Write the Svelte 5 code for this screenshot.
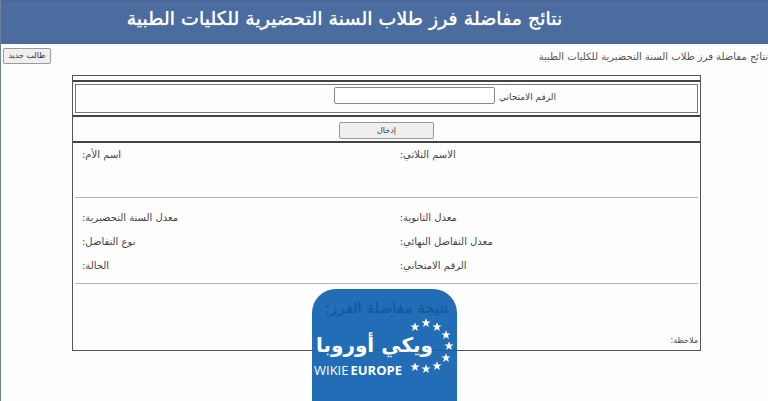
<script>
    let examNumber = $state("");

    const title = "نتائج مفاضلة فرز طلاب السنة التحضيرية للكليات الطبية";

    const names = ["الاسم الثلاثي:", "اسم الأم:"];

    const marks = [
        "معدل الثانوية:",
        "معدل السنة التحضيرية:",
        "معدل التفاضل النهائي:",
        "نوع التفاضل:",
        "الرقم الامتحاني:",
        "الحالة:",
    ];

    const stars = [
        [415, 327],
        [426, 323],
        [437, 327],
        [446, 335],
        [449, 346],
        [446, 358],
        [437, 366],
        [426, 369],
        [415, 367],
    ];

    function reset() {
        examNumber = "";
    }
</script>

<div class="page" dir="rtl">
    <header>
        <h1>{title}</h1>
    </header>

    <div class="toolbar">
        <span class="subtitle">{title}</span>
        <button type="button" class="new-student" onclick={reset}>طالب جديد</button>
    </div>

    <main>
        <form class="panel" onsubmit={(e) => e.preventDefault()}>
            <div class="strip"></div>
            <div class="search">
                <div class="search-box">
                    <label for="exam">الرقم الامتحاني</label>
                    <input id="exam" type="text" bind:value={examNumber} />
                </div>
            </div>
            <div class="submit">
                <button type="submit">إدخال</button>
            </div>
            <div class="result">
                <div class="fields names">
                    {#each names as name}
                        <span>{name}</span>
                    {/each}
                </div>
                <hr />
                <div class="fields marks">
                    {#each marks as mark}
                        <span>{mark}</span>
                    {/each}
                </div>
                <hr />
                <h2>نتيجة مفاضلة الفرز:</h2>
                <p>ملاحظة:</p>
            </div>
        </form>
    </main>

    <div class="badge">
        <svg viewBox="312 289 145 112" aria-hidden="true">
            {#each stars as [x, y]}
                <path
                    transform={`translate(${x} ${y})`}
                    d="M0-4.8 1.2-1.5 4.6-1.5 1.9.6 2.9 3.9 0 1.9-2.9 3.9-1.9.6-4.6-1.5-1.2-1.5Z"
                />
            {/each}
        </svg>
        <div class="brand">ويكي أوروبا</div>
        <div class="brand-latin" dir="ltr"><span>WIKIE</span><b>EUROPE</b></div>
    </div>
</div>

<style>
    :global(body) {
        margin: 0;
        background: #fefefe;
        overflow: hidden;
    }

    .page {
        position: relative;
        min-height: 100vh;
        box-sizing: border-box;
        border-left: 1px solid #6f7f98;
        font-family: "DejaVu Sans", sans-serif;
        font-size: 10px;
        color: #444;
    }

    header {
        display: flex;
        justify-content: center;
        height: 44px;
        box-sizing: border-box;
        padding-right: 80px;
        border-top: 1px solid #48648f;
        background: #4a6c9f;
    }

    h1 {
        margin: 0;
        font-size: 19px;
        font-weight: 400;
        line-height: 34px;
        white-space: nowrap;
        color: #fff;
        text-shadow: 0 0 1px #fff;
    }

    .toolbar {
        display: flex;
        justify-content: space-between;
        align-items: center;
        height: 24px;
        padding-left: 2px;
    }

    .subtitle {
        color: #555;
        white-space: nowrap;
    }

    button {
        box-sizing: border-box;
        padding: 0;
        border: 1px solid #999;
        border-radius: 2px;
        background: #efefef;
        font-family: "DejaVu Sans", sans-serif;
        font-size: 8px;
        line-height: 12px;
        color: #333;
    }

    .new-student {
        width: 48px;
        height: 16px;
    }

    main {
        padding: 7px 67px 0 71px;
    }

    .panel {
        border: 1px solid #555;
    }

    .strip {
        height: 4px;
        border-bottom: 2px solid #444;
    }

    .search {
        padding: 2px;
        border-bottom: 2px solid #444;
    }

    .search-box {
        display: flex;
        align-items: flex-start;
        gap: 4px;
        height: 27px;
        padding-right: 141px;
        border: 1px solid #777;
    }

    label {
        font-size: 9px;
        line-height: 24px;
        white-space: nowrap;
    }

    input {
        width: 161px;
        height: 17px;
        margin: 2px 0 0;
        padding: 0 2px;
        box-sizing: border-box;
        border: 1px solid #888;
        border-radius: 2px;
        background: #fff;
    }

    .submit {
        display: flex;
        justify-content: center;
        padding: 5px 0 2px;
        border-bottom: 2px solid #444;
    }

    .submit button {
        width: 95px;
        height: 17px;
    }

    .result {
        padding: 0 2px;
    }

    .fields {
        display: grid;
        grid-template-columns: 49fr 51fr;
        line-height: 24px;
        text-align: left;
    }

    .fields span {
        padding-left: 7px;
    }

    .names {
        height: 54px;
    }

    .marks {
        padding: 8px 0 5px;
    }

    hr {
        margin: 0;
        border: 0;
        border-top: 1px solid #b4b4b4;
    }

    h2 {
        margin: 0;
        font-size: 15px;
        font-weight: 400;
        line-height: 48px;
        text-align: center;
        color: #111;
        text-shadow: 0 0 1px #111;
    }

    p {
        margin: 0;
        font-size: 8px;
        line-height: 18px;
    }

    .badge {
        position: absolute;
        left: 311px;
        bottom: 0;
        width: 145px;
        height: 112px;
        box-sizing: border-box;
        padding: 40px 24px 0 2px;
        border-radius: 24px 24px 0 0;
        background: rgba(15, 97, 175, 0.92);
        color: #fff;
    }

    .badge svg {
        position: absolute;
        inset: 0;
        fill: #fff;
    }

    .brand {
        font-size: 20px;
        font-weight: 700;
        line-height: 32px;
        white-space: nowrap;
    }

    .brand-latin {
        display: flex;
        gap: 2px;
        font-family: "Open Sans", sans-serif;
        font-size: 13px;
        line-height: 18px;
    }
</style>
